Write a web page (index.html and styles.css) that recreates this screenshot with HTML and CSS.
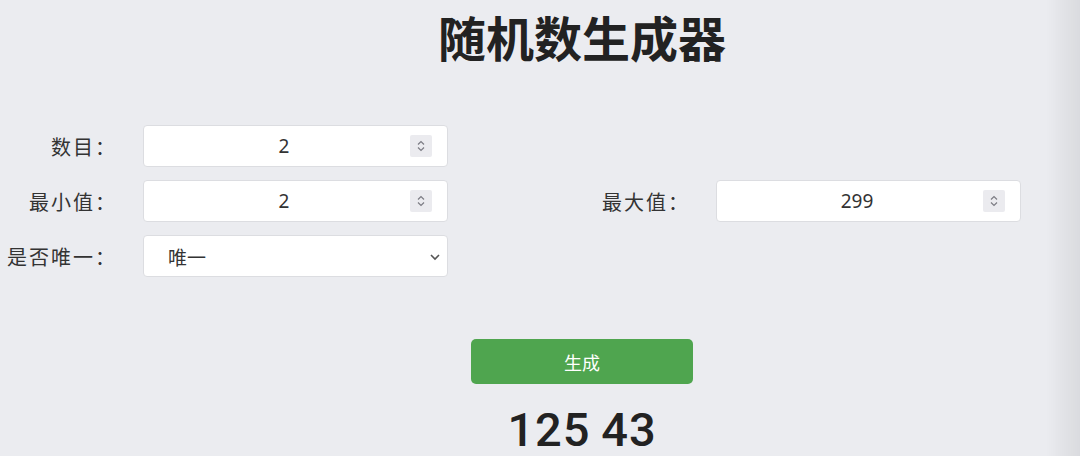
FILE: index.html
```html
<!DOCTYPE html>
<html lang="zh-CN">
<head>
<meta charset="UTF-8" />
<meta name="viewport" content="width=device-width, initial-scale=1" />
<title>随机数生成器</title>
<link rel="stylesheet" href="styles.css">
</head>
<body>
<div class="app">
  <h1>随机数生成器</h1>

  <form class="options" id="genForm">
    <label class="label" for="count">数目：</label>
    <div class="field">
      <input type="number" id="count" value="2" />
      <span class="spin">
        <svg width="10" height="16" viewBox="0 0 10 16"><path d="M2 6.5 L5 3.5 L8 6.5 M2 9.5 L5 12.5 L8 9.5" fill="none" stroke="#7c7c84" stroke-width="1.2" /></svg>
      </span>
    </div>
    <div></div>
    <div></div>

    <label class="label" for="min">最小值：</label>
    <div class="field">
      <input type="number" id="min" value="2" />
      <span class="spin">
        <svg width="10" height="16" viewBox="0 0 10 16"><path d="M2 6.5 L5 3.5 L8 6.5 M2 9.5 L5 12.5 L8 9.5" fill="none" stroke="#7c7c84" stroke-width="1.2" /></svg>
      </span>
    </div>
    <label class="label" for="max">最大值：</label>
    <div class="field">
      <input type="number" id="max" value="299" />
      <span class="spin">
        <svg width="10" height="16" viewBox="0 0 10 16"><path d="M2 6.5 L5 3.5 L8 6.5 M2 9.5 L5 12.5 L8 9.5" fill="none" stroke="#7c7c84" stroke-width="1.2" /></svg>
      </span>
    </div>

    <label class="label" for="unique">是否唯一：</label>
    <div class="field select-field">
      <select id="unique">
        <option>唯一</option>
        <option>不唯一</option>
      </select>
      <svg class="caret" width="12" height="8" viewBox="0 0 12 8"><path d="M2 2 L6 6 L10 2" fill="none" stroke="#555" stroke-width="1.6" /></svg>
    </div>
  </form>

  <div class="actions">
    <button type="submit" form="genForm">生成</button>
  </div>
  <div class="result" id="result">125 43</div>
</div>

<script>
  const form = document.getElementById('genForm');
  const result = document.getElementById('result');

  form.addEventListener('submit', function(event) {
    event.preventDefault();
    const count = parseInt(document.getElementById('count').value, 10);
    const min = parseInt(document.getElementById('min').value, 10);
    const max = parseInt(document.getElementById('max').value, 10);
    const unique = document.getElementById('unique').selectedIndex === 0;

    if (isNaN(count) || isNaN(min) || isNaN(max) || min > max) return;

    const nums = [];
    while (nums.length < count) {
      const n = Math.floor(Math.random() * (max - min + 1)) + min;
      if (unique && nums.includes(n)) {
        if (nums.length >= max - min + 1) break;
        continue;
      }
      nums.push(n);
    }
    result.textContent = nums.join(' ');
  });
</script>
</body>
</html>
```

FILE: styles.css
```css
html, body {
  height: 100%;
}
body {
  margin: 0;
  background: #ebecf0;
  color: #333;
  font-family: "Noto Sans CJK SC", "Noto Sans", sans-serif;
  overflow: hidden;
}
/* soft shadow on the right edge */
body::after {
  content: "";
  position: fixed;
  top: 0;
  right: 0;
  width: 34px;
  height: 100%;
  background: linear-gradient(to right, rgba(0, 0, 0, 0), rgba(0, 0, 0, 0.07));
  pointer-events: none;
}
.app {
  width: 1148px;
  padding: 0 8px;
}
h1 {
  margin: 0;
  padding-top: 5px;
  text-align: center;
  font-size: 48px;
  line-height: 62px;
  font-weight: 700;
  color: #222;
}
.options {
  display: grid;
  grid-template-columns: 99px 305px 196px 305px;
  grid-auto-rows: 42px;
  column-gap: 36px;
  row-gap: 13px;
  margin-top: 58px;
}
.label {
  align-self: center;
  justify-self: end;
  margin-right: -10px;
  font-size: 20px;
  letter-spacing: 2px;
  color: #333;
  white-space: nowrap;
}
.field {
  display: flex;
  align-items: center;
  background: #fff;
  border: 1px solid #dcdde1;
  border-radius: 4px;
  box-sizing: border-box;
  position: relative;
}
.field input {
  flex: 1;
  min-width: 0;
  height: 100%;
  border: none;
  outline: none;
  background: transparent;
  text-align: center;
  font-family: "Noto Sans", sans-serif;
  font-size: 19px;
  color: #333;
  -moz-appearance: textfield;
  padding: 0 0 0 18px;
}
.field input::-webkit-inner-spin-button,
.field input::-webkit-outer-spin-button {
  -webkit-appearance: none;
  margin: 0;
}
.spin {
  width: 22px;
  height: 22px;
  margin-right: 15px;
  margin-left: 4px;
  background: #ebebef;
  border-radius: 2px;
  display: flex;
  align-items: center;
  justify-content: center;
}
.select-field select {
  flex: 1;
  height: 100%;
  border: none;
  outline: none;
  background: transparent;
  -webkit-appearance: none;
  appearance: none;
  padding-left: 24px;
  font-family: "Noto Sans CJK SC", sans-serif;
  font-size: 19px;
  color: #333;
}
.select-field .caret {
  position: absolute;
  right: 6px;
  top: 17px;
  pointer-events: none;
}
.actions {
  text-align: center;
  margin-top: 62px;
}
button {
  width: 222px;
  height: 45px;
  background: #4fa54f;
  color: #fff;
  border: none;
  border-radius: 5px;
  font-family: "Noto Sans CJK SC", sans-serif;
  font-size: 18px;
  cursor: pointer;
}
.result {
  text-align: center;
  margin-top: 20px;
  font-family: Roboto, "Noto Sans", sans-serif;
  font-size: 47px;
  font-weight: 500;
  letter-spacing: 1px;
  word-spacing: -2px;
  line-height: 52px;
  color: #222;
}
```
